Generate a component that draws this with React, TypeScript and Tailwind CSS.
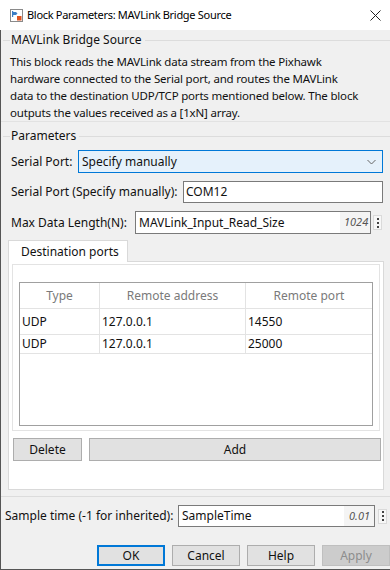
import React from "react";

function BlockIcon() {
  return (
    <svg width="13" height="13" viewBox="0 0 13 13">
      <rect x="0.5" y="0.5" width="12" height="12" fill="#fff" stroke="#8a8a8a" />
      <path d="M2 3h4l1.5 1.5L6 6H2z" fill="#3b7dc4" />
      <rect x="2" y="2" width="1.2" height="6" fill="#3b7dc4" />
      <rect x="7" y="7" width="4.5" height="4.5" fill="#e0531f" />
    </svg>
  );
}

function Dots() {
  return (
    <div className="w-[9px] h-[15px] border border-[#dadada] bg-[#f7f7f7] flex flex-col items-center justify-center gap-[2px]">
      <span className="block w-[2px] h-[2px] bg-[#444]" />
      <span className="block w-[2px] h-[2px] bg-[#444]" />
      <span className="block w-[2px] h-[2px] bg-[#444]" />
    </div>
  );
}

function GroupHeader({ title }: { title: string }) {
  return (
    <div className="h-[16px] flex items-center">
      <div className="w-[7px] ml-[2px] h-px bg-[#dcdcdc]" />
      <span className="px-[1px] leading-[16px] whitespace-nowrap">{title}</span>
      <div className="flex-1 h-px bg-[#dcdcdc] ml-[2px]" />
    </div>
  );
}

function Btn({ label, className = "" }: { label: string; className?: string }) {
  return (
    <div
      className={
        "flex items-center justify-center bg-[#e1e1e1] border border-[#adadad] " +
        className
      }
    >
      {label}
    </div>
  );
}

const rows = [
  { type: "UDP", addr: "127.0.0.1", port: "14550", h: "h-[26px]" },
  { type: "UDP", addr: "127.0.0.1", port: "25000", h: "h-[19px]" },
];

export default function App() {
  return (
    <div className="w-[390px] h-[570px] overflow-hidden flex flex-col bg-[#f0f0f0] text-[12px] text-[#111] font-['Noto_Sans',sans-serif]">
      {/* title bar */}
      <div className="h-[30px] shrink-0 bg-white flex items-center pl-[10px]">
        <BlockIcon />
        <span className="ml-[4px] text-[11px] tracking-[-0.3px] text-black">
          Block Parameters: MAVLink Bridge Source
        </span>
        <svg className="ml-auto mr-[9px]" width="11" height="11" viewBox="0 0 11 11">
          <path d="M0.5 0.5l10 10M10.5 0.5l-10 10" stroke="#222" strokeWidth="1" />
        </svg>
      </div>

      {/* body */}
      <div className="flex-1 flex flex-col border-l border-b border-[#555]">
        <div className="mt-[2px]">
          <GroupHeader title="MAVLink Bridge Source" />
        </div>
        <div className="mt-[5px] px-[9px] text-[11.5px] tracking-[-0.19px] leading-[17px] whitespace-nowrap">
          <div>This block reads the MAVLink data stream from the Pixhawk</div>
          <div>hardware connected to the Serial port, and routes the MAVLink</div>
          <div>data to the destination UDP/TCP ports mentioned below. The block</div>
          <div>outputs the values received as a [1xN] array.</div>
        </div>
        <div className="h-px bg-[#e2e2e2]" />

        <div className="mt-[6px]">
          <GroupHeader title="Parameters" />
        </div>

        {/* serial port */}
        <div className="mt-[6px] flex items-center pl-[10px] pr-[7px]">
          <span>Serial Port:</span>
          <div className="ml-auto w-[305px] h-[23px] border border-[#0078d7] bg-[#e5f1fb] flex items-center pl-[3px] pr-[6px]">
            <span>Specify manually</span>
            <svg className="ml-auto" width="9" height="6" viewBox="0 0 9 6">
              <path d="M0.5 1l4 4 4-4" fill="none" stroke="#666" strokeWidth="1" />
            </svg>
          </div>
        </div>

        <div className="mt-[8px] flex items-center pl-[10px] pr-[7px]">
          <span>Serial Port (Specify manually):</span>
          <div className="ml-auto w-[200px] h-[22px] border border-[#7a7a7a] bg-white flex items-center pl-[2px]">
            COM12
          </div>
        </div>

        <div className="mt-[8px] flex items-center pl-[10px] pr-[8px]">
          <span>Max Data Length(N):</span>
          <div className="ml-auto w-[236px] h-[23px] border border-[#7a7a7a] bg-white flex items-center pl-[3px]">
            <span>MAVLink_Input_Read_Size</span>
            <span className="ml-auto h-full w-[30px] bg-[#f4f4f4] flex items-center pl-[4px] overflow-hidden whitespace-nowrap italic text-[#555] text-[11px]">
              1024
            </span>
          </div>
          <div className="ml-[2px]">
            <Dots />
          </div>
        </div>

        {/* tab */}
        <div className="mt-[6px] ml-[7px] w-[120px] h-[22px] bg-white border border-b-0 border-[#d9d9d9] flex items-center pl-[12px] relative z-10">
          Destination ports
        </div>
        <div className="-mt-px ml-[7px] mr-[6px] h-[229px] bg-white border border-[#d9d9d9] flex flex-col">
          <div className="mt-[2px] mx-[3px] h-[167px] border border-[#e3e3e3] pt-[17px] px-[6px] pb-[4px]">
            <div className="h-full border border-[#a0a0a0] bg-white flex flex-col">
              <div className="h-[26px] flex text-[#7a7a7a] border-b border-[#e3e3e3]">
                <div className="w-[80px] flex items-center justify-center border-r border-[#e3e3e3]">Type</div>
                <div className="w-[146px] flex items-center justify-center border-r border-[#e3e3e3]">Remote address</div>
                <div className="flex-1 flex items-center justify-center">Remote port</div>
              </div>
              {rows.map((r, i) => (
                <div key={i} className={"flex border-b border-[#e3e3e3] " + r.h}>
                  <div className="w-[80px] flex items-center pl-[2px] border-r border-[#e3e3e3]">{r.type}</div>
                  <div className="w-[146px] flex items-center pl-[2px] border-r border-[#e3e3e3]">{r.addr}</div>
                  <div className="flex-1 flex items-center pl-[2px]">{r.port}</div>
                </div>
              ))}
            </div>
          </div>
          <div className="mt-[7px] flex pl-[4px] gap-[7px]">
            <Btn label="Delete" className="w-[69px] h-[23px]" />
            <Btn label="Add" className="w-[292px] h-[23px]" />
          </div>
        </div>

        <div className="mt-[6px] h-px bg-[#dcdcdc]" />

        {/* sample time */}
        <div className="mt-[8px] flex items-center pl-[4px]">
          <span>Sample time (-1 for inherited):</span>
          <div className="ml-auto w-[197px] h-[22px] border border-[#7a7a7a] bg-white flex items-center pl-[3px]">
            <span>SampleTime</span>
            <span className="ml-auto h-full w-[30px] bg-[#f4f4f4] flex items-center pl-[5px] overflow-hidden whitespace-nowrap italic text-[#555] text-[11px]">
              0.01
            </span>
          </div>
          <div className="ml-[3px] mr-[3px]">
            <Dots />
          </div>
        </div>

        {/* buttons */}
        <div className="mt-[18px] flex justify-end gap-[7px]">
          <Btn label="OK" className="w-[68px] h-[21px] !border-[#0078d7] border-2" />
          <Btn label="Cancel" className="w-[68px] h-[21px]" />
          <Btn label="Help" className="w-[68px] h-[21px]" />
          <div className="w-[68px] h-[21px] flex items-center justify-center bg-[#cccccc] border border-[#bfbfbf] text-[#8d8d8d]">
            Apply
          </div>
        </div>
      </div>
    </div>
  );
}
